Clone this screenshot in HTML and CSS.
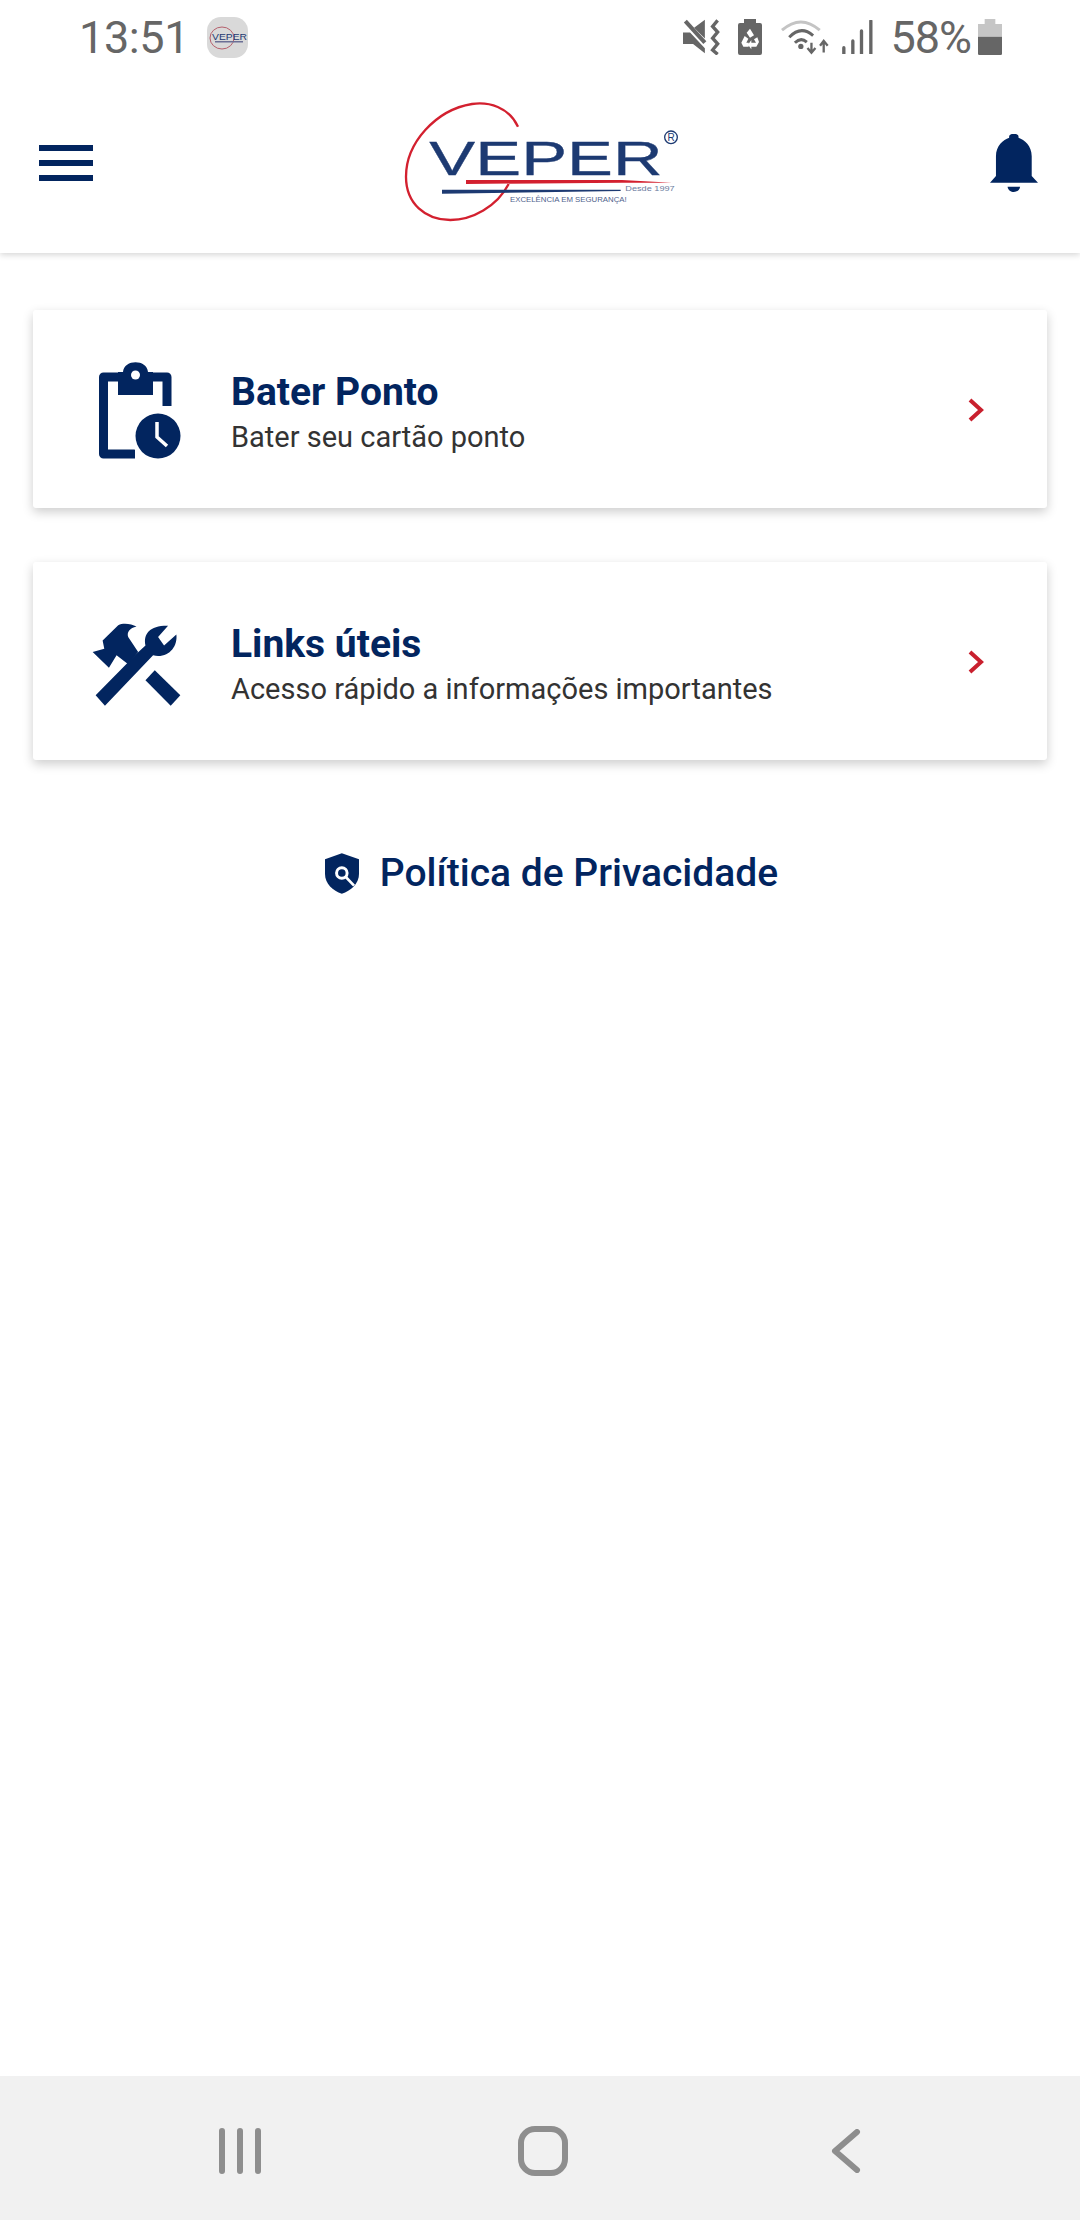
FILE: index.html
```html
<!DOCTYPE html>
<html lang="pt-BR">
<head>
    <meta charset="UTF-8">
    <meta name="viewport" content="width=device-width, initial-scale=1.0">
    <title>Veper</title>
    <link rel="stylesheet" href="styles.css">
</head>
<body>

<header class="header">
    <div class="statusbar">
        <span class="clock">13:51</span>
        <span class="notif-icon">
            <svg viewBox="0 0 41 41" width="41" height="41">
                <ellipse cx="15" cy="21" rx="12" ry="11" fill="none" stroke="#b5606c" stroke-width="1"/>
                <rect x="8" y="24" width="28" height="1.5" fill="#6b6f95"/>
                <text x="5" y="23" class="notif-text" textLength="35" lengthAdjust="spacingAndGlyphs">VEPER</text>
            </svg>
        </span>
        <div class="status-right">
            <svg class="st-mute" viewBox="75 58 110 107" width="37" height="36">
                <path d="M75 98 H96 L140 145 V160 L105 132 H75 Z M108 84 L140 60 V116 Z" fill="#666"/>
                <path d="M82 64 L140 128" stroke="#666" stroke-width="12"/>
                <path d="M178 62 L163 80 L178 97 L163 115 L178 132 L163 150 L178 163" fill="none" stroke="#666" stroke-width="10"/>
            </svg>
            <svg class="st-saver" viewBox="240 57 72 108" width="24" height="36">
                <path d="M258 57 H294 V69 H306 Q312 69 312 75 V159 Q312 165 306 165 H246 Q240 165 240 159 V75 Q240 69 246 69 H258 Z" fill="#666"/>
                <path d="M276 86 L288 106 L276 113 L266 98 Z M250 128 L260 108 L271 116 L265 128 L272 128 V140 H256 Z M303 126 L295 140 H280 V148 L270 134 L280 120 V128 H294 L288 118 L298 112 Z" fill="#fff"/>
            </svg>
            <svg class="st-wifi" viewBox="365 55 148 110" width="49" height="37">
                <path d="M371 88 Q428 38 485 88" fill="none" stroke="#c4c4c4" stroke-width="9"/>
                <path d="M393 109 Q428 72 465 104" fill="none" stroke="#666" stroke-width="9"/>
                <path d="M410 126 Q428 108 446 124" fill="none" stroke="#666" stroke-width="9"/>
                <circle cx="428" cy="137" r="8" fill="#666"/>
                <path d="M460 126 V152 M448 142 L460 156 L472 142 M497 155 V125 M486 135 L497 120 L509 135" fill="none" stroke="#666" stroke-width="7"/>
            </svg>
            <svg class="st-signal" viewBox="548 62 92 102" width="31" height="34">
                <path d="M553 145 V163 M580 125 V163 M606 95 V163 M634 65 V163" stroke="#666" stroke-width="10" stroke-linecap="round"/>
            </svg>
            <span class="percent">58%</span>
            <svg class="st-battery" viewBox="955 57 72 108" width="24" height="36">
                <path d="M975 57 H1007 V72 H1027 V110 H955 V72 H975 Z" fill="#c6c6c6"/>
                <path d="M955 110 H1027 V161 Q1027 165 1023 165 H959 Q955 165 955 161 Z" fill="#666"/>
            </svg>
        </div>
    </div>
    <div class="topbar">
        <div class="menu-btn">
            <span></span>
            <span></span>
            <span></span>
        </div>
        <svg class="logo" viewBox="0 0 960 480" width="320" height="160">
            <path d="M408 140 C380 80 320 65 270 72 C160 90 72 190 72 290 C72 370 130 420 205 420 C270 420 345 380 380 312" fill="none" stroke="#d3202f" stroke-width="7"/>
            <text x="142" y="286" class="logo-name" textLength="700" lengthAdjust="spacingAndGlyphs">VEPER</text>
            <path d="M252 300 H720 L870 308 H720 L252 312 Z" fill="#d3202f"/>
            <path d="M180 329 H716 V333 L180 341 Z" fill="#1d3a72"/>
            <text x="730" y="334" class="logo-since" textLength="148" lengthAdjust="spacingAndGlyphs">Desde 1997</text>
            <text x="384" y="366" class="logo-slogan" textLength="350" lengthAdjust="spacingAndGlyphs">EXCELÊNCIA EM SEGURANÇA!</text>
            <circle cx="867" cy="172" r="19" fill="none" stroke="#1d3a72" stroke-width="4"/>
            <text x="867" y="183" class="logo-reg" text-anchor="middle">R</text>
        </svg>
        <svg class="bell" viewBox="990 403 145 175" width="48" height="58">
            <path d="M990 550 L1008 530 V470 C1008 438 1030 420 1048 414 C1044 398 1080 398 1076 414 C1094 420 1116 438 1116 470 V530 L1135 550 Z" fill="#02255f"/>
            <path d="M1043 562 H1081 C1078 583 1046 583 1043 562 Z" fill="#02255f"/>
        </svg>
    </div>
</header>

<main class="content">
    <div class="card">
        <div class="card-icon icon-clock">
            <svg viewBox="0 0 82 97" width="82" height="97">
                <path d="M68 44 V15 H4.500 V92 H36" fill="none" stroke="#02255f" stroke-width="9" stroke-linejoin="round"/>
                <path d="M19 10 H24 C25 -3 48 -3 49 10 H54 V33 H19 Z" fill="#02255f"/>
                <circle cx="36.500" cy="13" r="4.500" fill="#fff"/>
                <circle cx="59" cy="74" r="27" fill="#fff"/>
                <circle cx="59" cy="74" r="22.500" fill="#02255f"/>
                <path d="M58 60 V75 L68 84" fill="none" stroke="#fff" stroke-width="3.500"/>
            </svg>
        </div>
        <div class="card-text">
            <div class="card-title">Bater Ponto</div>
            <div class="card-sub">Bater seu cartão ponto</div>
        </div>
        <svg class="chevron" viewBox="0 0 18 24" width="18" height="24">
            <path d="M3 2 L14 12 L3 22" fill="none" stroke="#c9202e" stroke-width="4"/>
        </svg>
    </div>

    <div class="card">
        <div class="card-icon icon-tools">
            <svg viewBox="205 245 280 258" width="93" height="86">
                <path d="M400 390 L477 465 L448 497 L372 420 Z" fill="#02255f"/>
                <path d="M222 465 L345 340 L372 315 C365 280 385 255 440 256 L410 290 L428 315 L465 282 C470 320 440 355 395 345 L250 497 Z" fill="#02255f"/>
                <path d="M243 300 L290 254 C305 246 330 250 345 258 C325 262 315 275 320 290 L350 335 L320 372 L285 345 L262 382 L213 335 L248 325 Z" fill="#02255f"/>
            </svg>
        </div>
        <div class="card-text">
            <div class="card-title">Links úteis</div>
            <div class="card-sub">Acesso rápido a informações importantes</div>
        </div>
        <svg class="chevron" viewBox="0 0 18 24" width="18" height="24">
            <path d="M3 2 L14 12 L3 22" fill="none" stroke="#c9202e" stroke-width="4"/>
        </svg>
    </div>

    <div class="privacy">
        <svg viewBox="72 62 103 123" width="34" height="41">
            <path d="M123 62 L175 80 V125 C175 155 150 175 123 185 C96 175 72 155 72 125 V80 Z" fill="#02255f"/>
            <circle cx="123" cy="122" r="16" fill="none" stroke="#fff" stroke-width="9"/>
            <path d="M135 134 L160 160" stroke="#fff" stroke-width="8"/>
        </svg>
        <span>Política de Privacidade</span>
    </div>
</main>

<nav class="navbar">
    <svg viewBox="0 0 44 46" width="44" height="46">
        <path d="M4 3 V43 M22 3 V43 M40 3 V43" stroke="#8e8e8e" stroke-width="6" stroke-linecap="round"/>
    </svg>
    <svg viewBox="0 0 50 50" width="50" height="50">
        <rect x="3" y="3" width="44" height="44" rx="14" fill="none" stroke="#8e8e8e" stroke-width="6"/>
    </svg>
    <svg viewBox="0 0 30 44" width="30" height="44">
        <path d="M26 3 L4 22 L26 41" fill="none" stroke="#8e8e8e" stroke-width="6" stroke-linecap="round" stroke-linejoin="round"/>
    </svg>
</nav>

</body>
</html>
```

FILE: styles.css
```css
body {
    font-family: Roboto, Arial, sans-serif;
    background-color: #ffffff;
    margin: 0;
    height: 2220px;
    display: flex;
    flex-direction: column;
    overflow: hidden;
}
.header {
    background-color: #fff;
    box-shadow: 0 2px 6px rgba(0, 0, 0, 0.16);
    height: 253px;
    flex-shrink: 0;
}
.statusbar {
    height: 74px;
    display: flex;
    align-items: center;
    padding: 0 78px 0 79px;
    color: #666;
}
.clock {
    font-size: 45px;
    letter-spacing: -0.4px;
    margin-right: 18px;
}
.notif-icon {
    width: 41px;
    height: 41px;
    background-color: #d9d9d9;
    border-radius: 14px;
    display: block;
}
.notif-text {
    font-family: "Liberation Sans", sans-serif;
    font-size: 9px;
    fill: #1d3a72;
}
.status-right {
    margin-left: auto;
    display: flex;
    align-items: center;
}
.st-saver {
    margin-left: 18px;
}
.st-wifi {
    margin-left: 18px;
}
.st-signal {
    margin-left: 13px;
}
.percent {
    font-size: 45px;
    letter-spacing: -1px;
    margin-left: 17px;
    margin-right: 7px;
}
.topbar {
    height: 179px;
    display: flex;
    align-items: center;
    justify-content: space-between;
    padding: 0 42px 2px 39px;
    box-sizing: border-box;
}
.menu-btn {
    width: 54px;
    display: flex;
    flex-direction: column;
    gap: 9px;
}
.menu-btn span {
    display: block;
    height: 6px;
    background-color: #02255f;
}
.logo {
    margin-bottom: 6px;
}
.logo-name {
    font-family: "Liberation Sans", sans-serif;
    font-size: 146px;
    fill: #1d3a72;
    stroke: #1d3a72;
    stroke-width: 1px;
}
.logo-since {
    font-family: "Liberation Sans", sans-serif;
    font-size: 24px;
    fill: #6b7ba0;
}
.logo-slogan {
    font-family: "Liberation Sans", sans-serif;
    font-size: 23px;
    fill: #4f628c;
}
.logo-reg {
    font-family: "Liberation Sans", sans-serif;
    font-size: 30px;
    fill: #1d3a72;
}
.content {
    flex: 1;
    padding: 57px 33px 0;
}
.card {
    height: 198px;
    background-color: #fff;
    box-shadow: 0 4px 11px rgba(0, 0, 0, 0.2);
    border-radius: 3px;
    display: flex;
    align-items: center;
    margin-bottom: 54px;
}
.card-icon {
    width: 198px;
    display: flex;
    box-sizing: border-box;
}
.icon-clock {
    padding-left: 66px;
    padding-top: 3px;
}
.icon-tools {
    padding-left: 57px;
    padding-top: 8px;
}
.card-text {
    flex: 1;
    padding-top: 10px;
}
.card-title {
    font-size: 39px;
    font-weight: 700;
    color: #02255f;
    line-height: 46px;
}
.card-sub {
    font-size: 29px;
    color: #333;
    line-height: 44px;
}
.chevron {
    margin-right: 62px;
    margin-top: 2px;
}
.privacy {
    display: flex;
    align-items: center;
    justify-content: center;
    gap: 21px;
    margin-top: 90px;
    padding-left: 23px;
    color: #02255f;
    font-size: 39px;
    font-weight: 500;
}
.navbar {
    height: 144px;
    flex-shrink: 0;
    background-color: #f1f1f1;
    display: grid;
    grid-template-columns: 303px 303px 303px;
    justify-content: center;
    justify-items: center;
    align-items: center;
    padding: 6px 0 0 6px;
    box-sizing: border-box;
}
```
